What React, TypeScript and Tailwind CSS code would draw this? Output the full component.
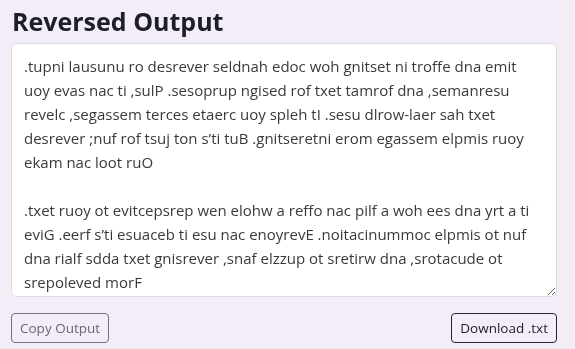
import { useState } from "react";

const OUTPUT_TEXT =
  ".tupni lausunu ro desrever seldnah edoc woh gnitset ni troffe dna emit uoy evas nac ti ,sulP .sesoprup ngised rof txet tamrof dna ,semanresu revelc ,segassem terces etaerc uoy spleh tI .sesu dlrow-laer sah txet desrever ;nuf rof tsuj ton s’ti tuB .gnitseretni erom egassem elpmis ruoy ekam nac loot ruO\n\n.txet ruoy ot evitcepsrep wen elohw a reffo nac pilf a woh ees dna yrt a ti eviG .eerf s’ti esuaceb ti esu nac enoyrevE .noitacinummoc elpmis ot nuf dna rialf sdda txet gnisrever ,snaf elzzup ot sretirw dna ,srotacude ot srepoleved morF";

export default function App() {
  const [text] = useState(OUTPUT_TEXT);

  return (
    <div
      className="min-h-[349px] bg-[#f3edf7] text-[#212529]"
      style={{ fontFamily: '"Open Sans", "Noto Sans", sans-serif' }}
    >
      <div className="w-[546px] ml-[11px] pt-[3px]">
        <h2 className="text-[25px] font-bold leading-[36px] text-[#1e1e2a] pl-[1px]">Reversed Output</h2>

        <textarea
          readOnly
          value={text}
          className="mt-[4px] block w-full h-[254px] bg-white border border-[#dedbe3] rounded-[6px] px-[12px] py-[10px] text-[15px] leading-[24px] text-[#3a3a3a] resize-y outline-none"
        />

        <div className="mt-[16px] flex items-center justify-between">
          <button
            disabled
            className="h-[30px] px-[8px] rounded-[4px] border border-[#75707f] text-[13.5px] text-[#6a6670] bg-transparent"
          >
            Copy Output
          </button>
          <button className="h-[30px] px-[8px] rounded-[4px] border border-[#26232b] text-[13.5px] text-[#1e1e2a] bg-transparent">
            Download .txt
          </button>
        </div>
      </div>
    </div>
  );
}
